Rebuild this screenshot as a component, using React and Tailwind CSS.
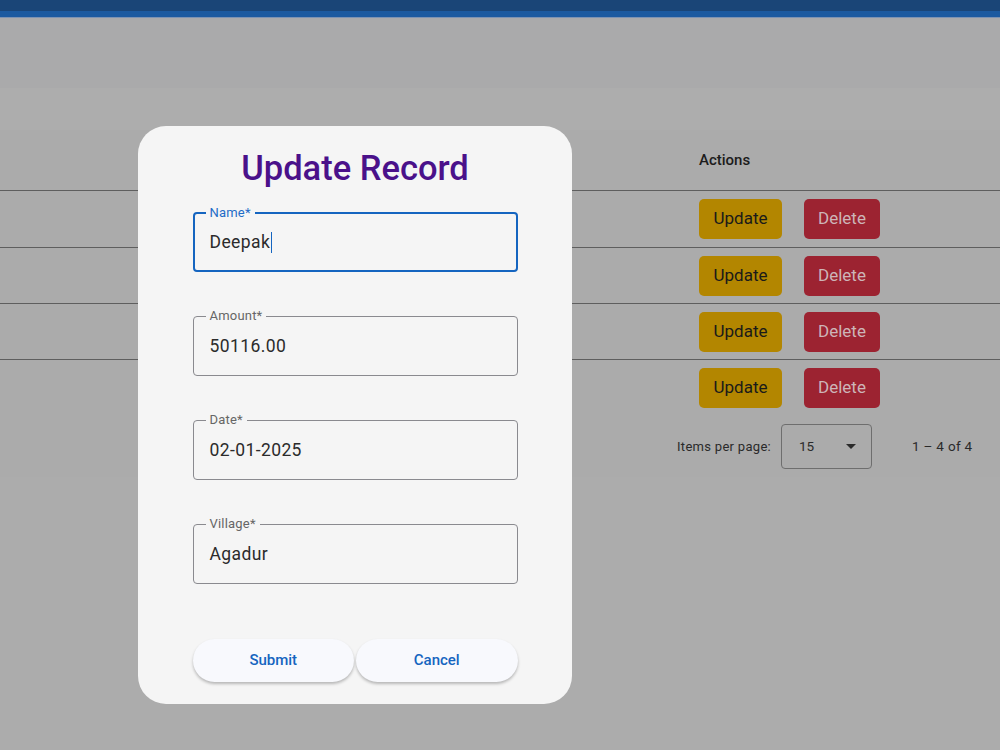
import React from "react";

const ROW_H = ["h-[57px]", "h-[56px]", "h-[56px]", "h-[56px]"];

const Field = ({ label, value, focused }) => (
  <div
    className={`relative h-[60px] w-[325px] rounded-[4px] ${
      focused ? "border-2 border-[#1565c0]" : "border border-[#8a8a8f]"
    }`}
  >
    <span
      className={`absolute top-[-9px] bg-[#f5f5f5] px-[4px] text-[13px] leading-[16px] tracking-[0.2px] ${
        focused ? "left-[11px] text-[#1f6cc7]" : "left-[12px] text-[#666]"
      }`}
    >
      {label}
    </span>
    <div
      className={`flex h-full items-center text-[17.5px] tracking-[0.4px] text-[#2b2b2b] ${
        focused ? "pl-[15px]" : "pl-[16px]"
      }`}
    >
      {value}
      {focused && <span className="ml-[1px] h-[21px] w-px bg-[#1565c0]" />}
    </div>
  </div>
);

export default function App() {
  return (
    <div
      className="relative h-[750px] w-[1000px] overflow-hidden bg-[#acacac]"
      style={{ fontFamily: "Roboto, 'Liberation Sans', sans-serif" }}
    >
      {/* top bar (dimmed) */}
      <div className="h-[11px] bg-[#1a4577]" />
      <div className="h-[6px] bg-[#1c5aa0]" />
      <div className="h-px bg-[#7d93b3]" />
      <div className="h-[70px] bg-[#aaaaab]" />
      <div className="h-[42px] bg-[#adadad]" />

      {/* table */}
      <div className="bg-[#ababab]">
        <div className="flex h-[61px] items-center border-b border-[#5e5e5e] pl-[699px] text-[15px] font-medium text-[#1c1c1c]">
          Actions
        </div>
        {ROW_H.map((h, i) => (
          <div
            key={i}
            className={`flex ${h} items-center gap-[22px] pl-[699px] ${
              i < ROW_H.length - 1 ? "border-b border-[#5e5e5e]" : ""
            }`}
          >
            <button className="h-[40px] w-[83px] rounded-[5px] bg-[#b38600] text-[17px] text-[#1a1a1a]">
              Update
            </button>
            <button className="h-[40px] w-[76px] rounded-[5px] bg-[#9c2331] text-[17px] text-[#cdb5b8]">
              Delete
            </button>
          </div>
        ))}
        <div className="flex h-[61px] items-center pl-[677px] text-[13px] text-[#2a2a2a]">
          <span className="w-[104px] tracking-[0.3px]">Items per page:</span>
          <div className="flex h-[45px] w-[91px] items-center rounded-[4px] border border-[#6e6e6e] pl-[17px] pr-[15px]">
            <span className="text-[13.5px]">15</span>
            <span className="ml-auto h-0 w-0 border-x-[5px] border-t-[5px] border-x-transparent border-t-[#2a2a2a]" />
          </div>
          <span className="ml-[40px] text-[13.5px] tracking-[0.3px]">1 – 4 of 4</span>
        </div>
      </div>

      {/* dialog */}
      <div className="absolute left-[138px] top-[126px] flex h-[578px] w-[434px] flex-col items-center rounded-[28px] bg-[#f5f5f5]">
        <h2 className="mt-[20px] text-[34.5px] font-medium leading-[44px] text-[#4a118a]">
          Update Record
        </h2>
        <div className="mt-[22px] flex flex-col gap-[44px]">
          <Field label="Name*" value="Deepak" focused />
          <Field label="Amount*" value="50116.00" />
          <Field label="Date*" value="02-01-2025" />
          <Field label="Village*" value="Agadur" />
        </div>
        <div className="mt-[55px] flex w-[325px] gap-[2px]">
          <button className="h-[43px] flex-1 rounded-full bg-[#f8f9fd] text-[15px] font-medium text-[#1565c0] shadow-[0_2px_3px_rgba(0,0,0,0.25)]">
            Submit
          </button>
          <button className="h-[43px] flex-1 rounded-full bg-[#f8f9fd] text-[15px] font-medium text-[#1565c0] shadow-[0_2px_3px_rgba(0,0,0,0.25)]">
            Cancel
          </button>
        </div>
      </div>
    </div>
  );
}
